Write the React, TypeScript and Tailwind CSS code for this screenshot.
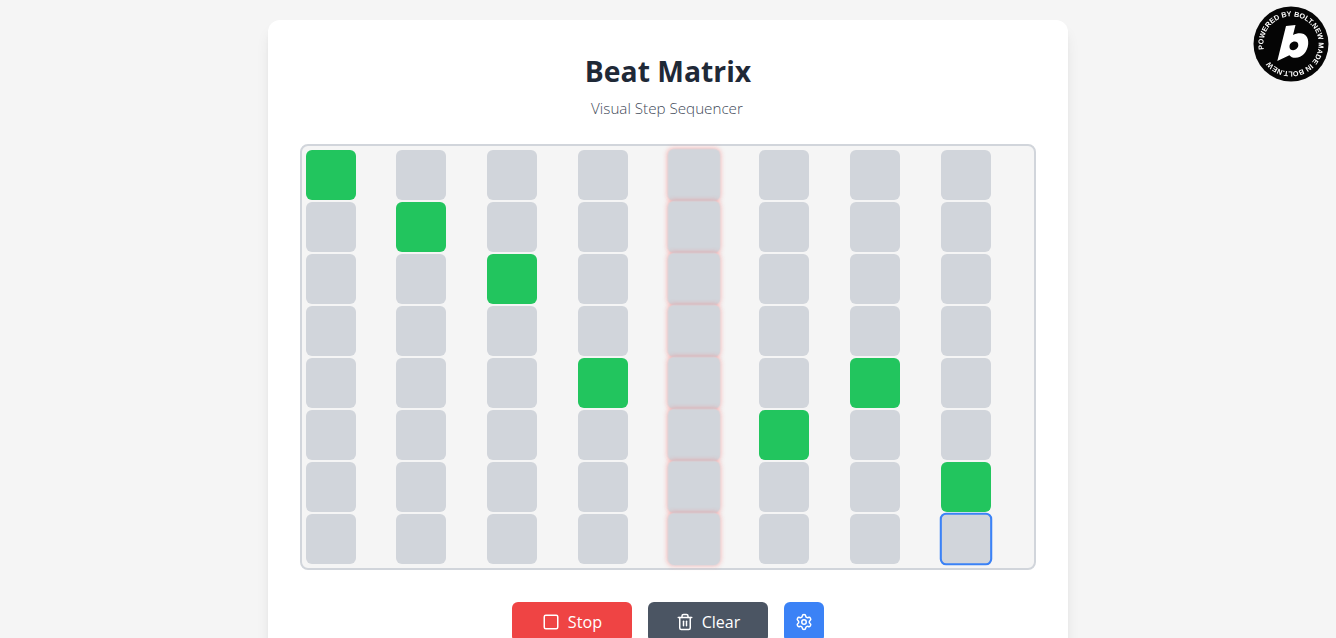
import { Square, Trash2, Settings } from "lucide-react";

const active: Record<string, boolean> = {
  "0-0": true, "1-1": true, "2-2": true, "4-3": true, "4-6": true, "5-5": true, "6-7": true,
};

function Badge() {
  return (
    <div className="fixed top-[6px] right-[7px] w-[76px] h-[76px]">
      <svg viewBox="0 0 76 76" width="76" height="76">
        <defs>
          <path id="ring" transform="rotate(-11 38 38)" d="M38 38 m-27.6 0 a27.6 27.6 0 1 1 55.2 0 a27.6 27.6 0 1 1 -55.2 0" />
        </defs>
        <circle cx="38" cy="38" r="37.5" fill="#050505" />
        <text fill="#fff" fontSize="7.2" fontWeight="700" style={{ fontFamily: '"Liberation Sans", sans-serif' }}>
          <textPath href="#ring" startOffset="0">POWERED BY BOLT.NEW MADE IN BOLT.NEW</textPath>
        </text>
        <path
          fill="#fff"
          fillRule="evenodd"
          d="M33 20 L42.5 19 L40 29 C42 27.8 44.5 27.2 47 27.2 C52.5 27.2 55.8 31.5 55.2 38 C54.4 46 49 51.8 42.5 51.8 C39.6 51.8 37.6 50.8 36.4 49.2 L24.3 55 Z M41.6 35.6 C39 35.6 36.8 37.8 36.5 40.2 C36.3 42.6 37.8 44.2 40.2 44.2 C42.8 44.2 45 42 45.3 39.6 C45.5 37.2 44 35.6 41.6 35.6 Z"
        />
      </svg>
    </div>
  );
}

export default function App() {
  return (
    <div
      className="h-screen overflow-hidden bg-[#f5f5f5] flex flex-col items-center pt-[20px]"
      style={{ fontFamily: '"Open Sans", "Noto Sans", sans-serif' }}
    >
      <div className="w-[800px] shrink-0 bg-white rounded-xl shadow-lg p-8">
        <div className="text-center mb-6">
          <h1 className="text-[28.3px] font-bold text-[#1f2937] mb-2 leading-9 pt-[1px] h-9">Beat Matrix</h1>
          <p className="text-[15.2px] font-light text-[#3f4a59] leading-6 pr-[2px]">Visual Step Sequencer</p>
        </div>
        <div className="grid grid-cols-8 gap-[2px] pl-[3.7px] pr-[4.3px] py-1 border-2 border-[#d1d5db] rounded-lg bg-[#f5f5f5]">
          {Array.from({ length: 8 }).flatMap((_, r) =>
            Array.from({ length: 8 }).map((_, c) => {
              const on = active[`${r}-${c}`];
              const playing = c === 4;
              const selected = r === 7 && c === 7;
              return (
                <div
                  key={`${r}-${c}`}
                  className={`w-[50px] h-[50px] rounded-md ${on ? "bg-[#22c55e]" : "bg-[#d1d5db]"} ${
                    playing ? "scale-105 will-change-transform shadow-[0_0_5px_rgba(248,113,113,0.55)]" : ""
                  } ${selected ? "scale-105 border-2 border-[#3b82f6]" : ""}`}
                />
              );
            })
          )}
        </div>
        <div className="flex justify-center gap-4 mt-8">
          <button className="w-[120px] h-10 rounded-md bg-[#ef4444] text-white font-medium text-[16.2px] flex items-center justify-center gap-2">
            <Square size={18} />
            Stop
          </button>
          <button className="w-[120px] h-10 rounded-md bg-[#4b5563] text-white font-medium text-[16px] flex items-center justify-center gap-2">
            <Trash2 size={18} />
            Clear
          </button>
          <button className="w-10 h-10 rounded-md bg-[#3b82f6] text-white flex items-center justify-center">
            <Settings size={18} />
          </button>
        </div>
      </div>
      <Badge />
    </div>
  );
}
